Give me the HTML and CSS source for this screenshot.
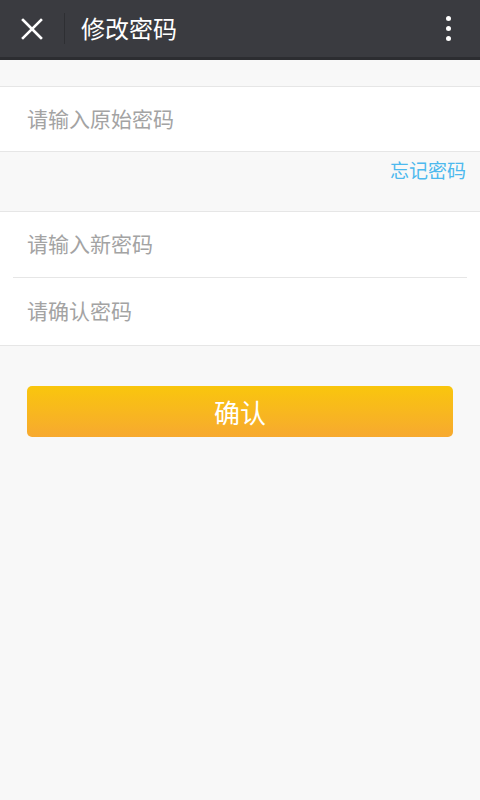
FILE: index.html
```html
<!DOCTYPE html>
<html lang="zh-CN">
<head>
<meta charset="utf-8">
<link rel="stylesheet" href="styles.css">
</head>
<body>
<header class="topbar">
  <div class="close">
    <svg width="22" height="22" viewBox="0 0 22 22"><path d="M2 2L20 20M20 2L2 20" stroke="#fff" stroke-width="2.6" stroke-linecap="square"/></svg>
  </div>
  <div class="sep"></div>
  <div class="title">修改密码</div>
  <div class="more"><span></span><span></span><span></span></div>
</header>
<main class="content">
  <section class="group first">
    <div class="row r1">请输入原始密码</div>
  </section>
  <div class="forgot-line"><span class="forgot">忘记密码</span></div>
  <section class="group">
    <div class="row">请输入新密码</div>
    <div class="divider"></div>
    <div class="row r3">请确认密码</div>
  </section>
  <div class="btn-wrap"><div class="btn">确认</div></div>
</main>
</body>
</html>
```
FILE: styles.css
```css
html, body { margin: 0; padding: 0; }
body {
  width: 480px; height: 800px;
  background: #f8f8f8;
  font-family: "Noto Sans CJK SC", "Noto Sans", sans-serif;
  overflow: hidden;
}
.topbar {
  height: 57px;
  background: #3a3b40;
  border-bottom: 3px solid #2c2d31;
  display: flex;
  align-items: center;
}
.close { width: 64px; display: flex; justify-content: center; padding-top: 1px; }
.close svg { display: block; }
.sep { width: 1px; height: 31px; background: #2e2f33; }
.title { color: #fff; font-size: 24px; margin-left: 16px; flex: 1; line-height: 1; margin-top: -1px; }
.more { width: 64px; display: flex; flex-direction: column; align-items: center; gap: 5px; }
.more span { width: 5px; height: 5px; border-radius: 50%; background: #fff; }
.content { display: flex; flex-direction: column; }
.group {
  background: #fff;
  border-top: 1px solid #e6e6e6;
  border-bottom: 1px solid #e6e6e6;
}
.group.first { margin-top: 26px; }
.row {
  height: 65px;
  box-sizing: border-box;
  display: flex; align-items: center;
  padding-left: 27px;
  padding-bottom: 3px;
  font-size: 21px;
  color: #a3a3a3;
}
.row.r1 { height: 64px; padding-bottom: 2px; }
.row.r3 { height: 67px; padding-bottom: 4px; }
.divider { height: 1px; background: #e6e6e6; margin: 0 13px; }
.forgot-line { height: 59px; display: flex; justify-content: flex-end; padding-right: 14px; }
.forgot { color: #4db9ee; font-size: 19px; margin-top: 4px; }
.btn-wrap { padding: 40px 27px 0; }
.btn {
  height: 51px;
  border-radius: 5px;
  background: linear-gradient(#f9c60d, #f7a930);
  color: #fff;
  font-size: 26px;
  display: flex; align-items: center; justify-content: center;
}
```
